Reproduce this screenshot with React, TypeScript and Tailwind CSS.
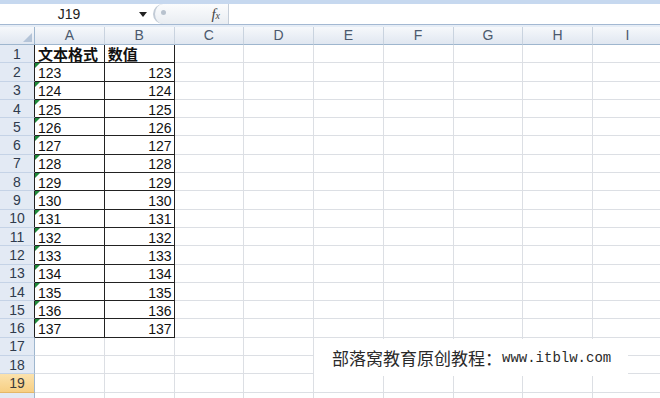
const COLS = ["A", "B", "C", "D", "E", "F", "G", "H", "I"];

type Row = { n: number; a?: string; b?: string };

const rows: Row[] = [
    { n: 1, a: "文本格式", b: "数值" },
    ...Array.from({ length: 15 }, (_, i) => ({ n: i + 2, a: String(123 + i), b: String(123 + i) })),
    { n: 17 },
    { n: 18 },
    { n: 19 },
    { n: 20 },
];

function FormulaBar() {
    return (
        <>
            <div className="h-[4px] bg-[#c6d8ef]" />
            <div className="flex h-[21px] border-b border-[#a3b8d2] bg-white">
                <div className="flex w-[150px] shrink-0 items-center">
                    <span className="w-[138px] text-center text-[14px] text-[#222]">J19</span>
                    <svg width="8" height="5" viewBox="0 0 8 5" className="ml-[1px]">
                        <path d="M0 0 H8 L4 5 Z" fill="#222" />
                    </svg>
                </div>
                <div className="relative ml-[3px] flex w-[75px] shrink-0 items-center justify-end rounded-l-[10px] border-l-2 border-[#c2cbd6] bg-gradient-to-b from-[#fbfcfd] to-[#e9edf2] pr-[8px]">
                    <span className="absolute left-[6px] top-[6px] h-[5px] w-[5px] rounded-full bg-[#b8c2ce]" />
                    <span className="font-['Liberation_Serif'] text-[15px] italic leading-none text-[#444]">
                        f<span className="text-[10px]">x</span>
                    </span>
                </div>
                <div className="flex-1 border-l border-[#c5ced9] bg-white" />
            </div>
            <div className="h-[2px] bg-[#e6edf6]" />
        </>
    );
}

function HeaderRow() {
    return (
        <div className="flex h-[18px] bg-gradient-to-b from-[#f6f8fb] to-[#dfe6f0]">
            <div className="relative w-[35px] shrink-0 border-r border-b border-[#9eb6ce]">
                <div className="absolute bottom-[2px] right-[2px] h-0 w-0 border-b-[9px] border-l-[9px] border-b-[#b4c4d8] border-l-transparent" />
            </div>
            {COLS.map((c) => (
                <div
                    key={c}
                    className="flex w-[69.75px] shrink-0 items-center justify-center border-r border-b border-r-[#c9d3df] border-b-[#9eb6ce] text-[14px] text-[#4b596d]"
                >
                    {c}
                </div>
            ))}
        </div>
    );
}

function SheetRow({ row }: { row: Row }) {
    const inTable = row.n <= 16;
    const selected = row.n === 19;
    return (
        <div className="flex h-[18.3px] shrink-0">
            <div
                className={
                    "flex w-[35px] shrink-0 items-center justify-center border-b text-[14px] leading-none " +
                    (selected
                        ? "border-b-[#e5b768] bg-gradient-to-b from-[#fbe2ad] to-[#f7cf83] text-[#3a3a3a] "
                        : "border-b-[#c5d3e6] bg-[#e3eaf4] text-[#2f3b4d] ") +
                    (inTable ? "border-r border-r-[#222]" : "border-r border-r-[#9eb6ce]")
                }
            >
                {row.n < 20 ? row.n : ""}
            </div>
            {COLS.map((c, i) => {
                const tableCell = inTable && i < 2;
                const header = row.n === 1;
                return (
                    <div
                        key={c}
                        className={
                            "relative flex w-[69.75px] shrink-0 items-center border-r border-b text-[14px] leading-none text-[#111] " +
                            (tableCell ? "border-[#222] " : "border-[#dcdfe4] ") +
                            (i === 1 && !header ? "justify-end pr-[2px]" : "pl-[3px]")
                        }
                    >
                        {tableCell && i === 0 && !header && (
                            <span className="absolute left-0 top-0 h-0 w-0 border-t-[5px] border-r-[5px] border-t-[#1f8a3a] border-r-transparent" />
                        )}
                        {tableCell && header && (
                            <span className="font-['Noto_Sans_CJK_SC',sans-serif] text-[15px] font-bold leading-[15px]">
                                {i === 0 ? row.a : row.b}
                            </span>
                        )}
                        {tableCell && !header && <span className="pt-[2px]">{i === 0 ? row.a : row.b}</span>}
                    </div>
                );
            })}
        </div>
    );
}

export default function App() {
    return (
        <div className="relative h-[398px] w-[660px] overflow-hidden bg-white font-['Liberation_Sans',sans-serif]">
            <FormulaBar />
            <HeaderRow />
            {rows.map((r) => (
                <SheetRow key={r.n} row={r} />
            ))}
            <div className="absolute left-[314px] top-[339px] flex h-[37px] w-[314px] items-center bg-white pl-[18px] text-[#2a2a2a]">
                <span className="font-['Noto_Sans_CJK_SC',sans-serif] text-[17px] leading-none">部落窝教育原创教程：</span>
                <span className="font-['Liberation_Mono',monospace] text-[14px] leading-none">www.itblw.com</span>
            </div>
        </div>
    );
}
